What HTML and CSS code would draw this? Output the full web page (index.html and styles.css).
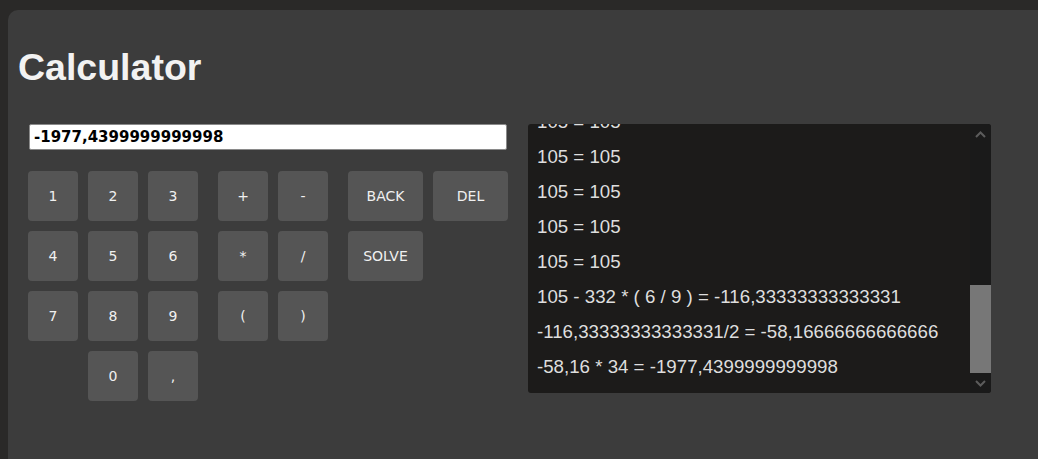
FILE: index.html
```html
<!DOCTYPE html>
<html lang="en">
<head>
<meta charset="utf-8">
<title>Calculator</title>
<link rel="stylesheet" href="styles.css">
</head>
<body>
<div class="app">
  <h1 class="title">Calculator</h1>
  <div class="main">
    <div class="calc">
      <input class="display" type="text" value="-1977,4399999999998" readonly>
      <div class="keypad">
        <button class="key">1</button>
        <button class="key">2</button>
        <button class="key">3</button>
        <span class="spacer"></span>
        <button class="key">+</button>
        <button class="key">-</button>
        <span class="spacer"></span>
        <button class="key">BACK</button>
        <button class="key">DEL</button>

        <button class="key">4</button>
        <button class="key">5</button>
        <button class="key">6</button>
        <span class="spacer"></span>
        <button class="key">*</button>
        <button class="key">/</button>
        <span class="spacer"></span>
        <button class="key">SOLVE</button>
        <span class="empty"></span>

        <button class="key">7</button>
        <button class="key">8</button>
        <button class="key">9</button>
        <span class="spacer"></span>
        <button class="key">(</button>
        <button class="key">)</button>
        <span class="spacer"></span>
        <span class="empty"></span>
        <span class="empty"></span>

        <span class="empty"></span>
        <button class="key">0</button>
        <button class="key">,</button>
      </div>
    </div>
    <div class="history">
      <div class="history-list">
        <div class="entry">105 = 105</div>
        <div class="entry">105 = 105</div>
        <div class="entry">105 = 105</div>
        <div class="entry">105 = 105</div>
        <div class="entry">105 = 105</div>
        <div class="entry">105 - 332 * ( 6 / 9 ) = -116,33333333333331</div>
        <div class="entry">-116,33333333333331/2 = -58,16666666666666</div>
        <div class="entry">-58,16 * 34 = -1977,4399999999998</div>
      </div>
      <div class="scrollbar">
        <div class="sb-btn">
          <svg width="11" height="7" viewBox="0 0 11 7"><path d="M1 6 L5.5 1.5 L10 6" fill="none" stroke="#5c5c5c" stroke-width="2"/></svg>
        </div>
        <div class="sb-track"></div>
        <div class="sb-thumb"></div>
        <div class="sb-btn">
          <svg width="11" height="7" viewBox="0 0 11 7"><path d="M1 1 L5.5 5.5 L10 1" fill="none" stroke="#5c5c5c" stroke-width="2"/></svg>
        </div>
      </div>
    </div>
  </div>
</div>
</body>
</html>
```

FILE: styles.css
```css
html, body {
  margin: 0;
  padding: 0;
  background: #2a2928;
  overflow: hidden;
}

body {
  padding: 10px 0 0 8px;
}

.app {
  background: #3c3c3c;
  border-radius: 10px 0 0 0;
  height: 449px;
  padding: 36px 0 0 20px;
  box-sizing: border-box;
  font-family: "Liberation Sans", Arial, sans-serif;
}

.title {
  margin: 0 0 0 -10px;
  font-family: "Liberation Sans", Arial, sans-serif;
  font-weight: bold;
  font-size: 37.5px;
  line-height: 42px;
  color: #f2f2f2;
}

.main {
  display: flex;
  align-items: flex-start;
  gap: 20px;
  margin-top: 36px;
}

.calc {
  display: flex;
  flex-direction: column;
  gap: 21px;
  width: 480px;
}

.display {
  box-sizing: border-box;
  width: 478px;
  height: 26px;
  margin: 0 0 0 1px;
  padding: 0 4px;
  border: 1px solid #8a8a8a;
  border-radius: 2px;
  background: #ffffff;
  color: #000000;
  font-family: "DejaVu Sans", Verdana, sans-serif;
  font-weight: bold;
  font-size: 15px;
  outline: none;
}

.keypad {
  display: grid;
  grid-template-columns: 50px 50px 50px 0 50px 50px 0 75px 75px;
  grid-auto-rows: 50px;
  gap: 10px;
}

.key {
  border: none;
  border-radius: 4px;
  background: #555555;
  color: #f0f0f0;
  font-family: "DejaVu Sans", Verdana, sans-serif;
  font-size: 14px;
  padding: 0;
  margin: 0;
}

.history {
  display: flex;
  width: 463px;
  height: 269px;
  background: #1c1b1a;
  border-radius: 3px;
  overflow: hidden;
}

.history-list {
  flex: 1;
  display: flex;
  flex-direction: column;
  justify-content: flex-end;
  overflow: hidden;
  padding: 0 0 9px 9px;
}

.entry {
  flex: none;
  font-family: "Liberation Sans", Arial, sans-serif;
  font-size: 18.7px;
  line-height: 35px;
  color: #dedede;
  white-space: nowrap;
}

.scrollbar {
  width: 21px;
  display: flex;
  flex-direction: column;
  background: #1a1a1a;
}

.sb-btn {
  height: 20px;
  display: flex;
  align-items: center;
  justify-content: center;
}

.sb-track {
  flex: 1;
}

.sb-thumb {
  height: 88px;
  background: #777777;
}
```
